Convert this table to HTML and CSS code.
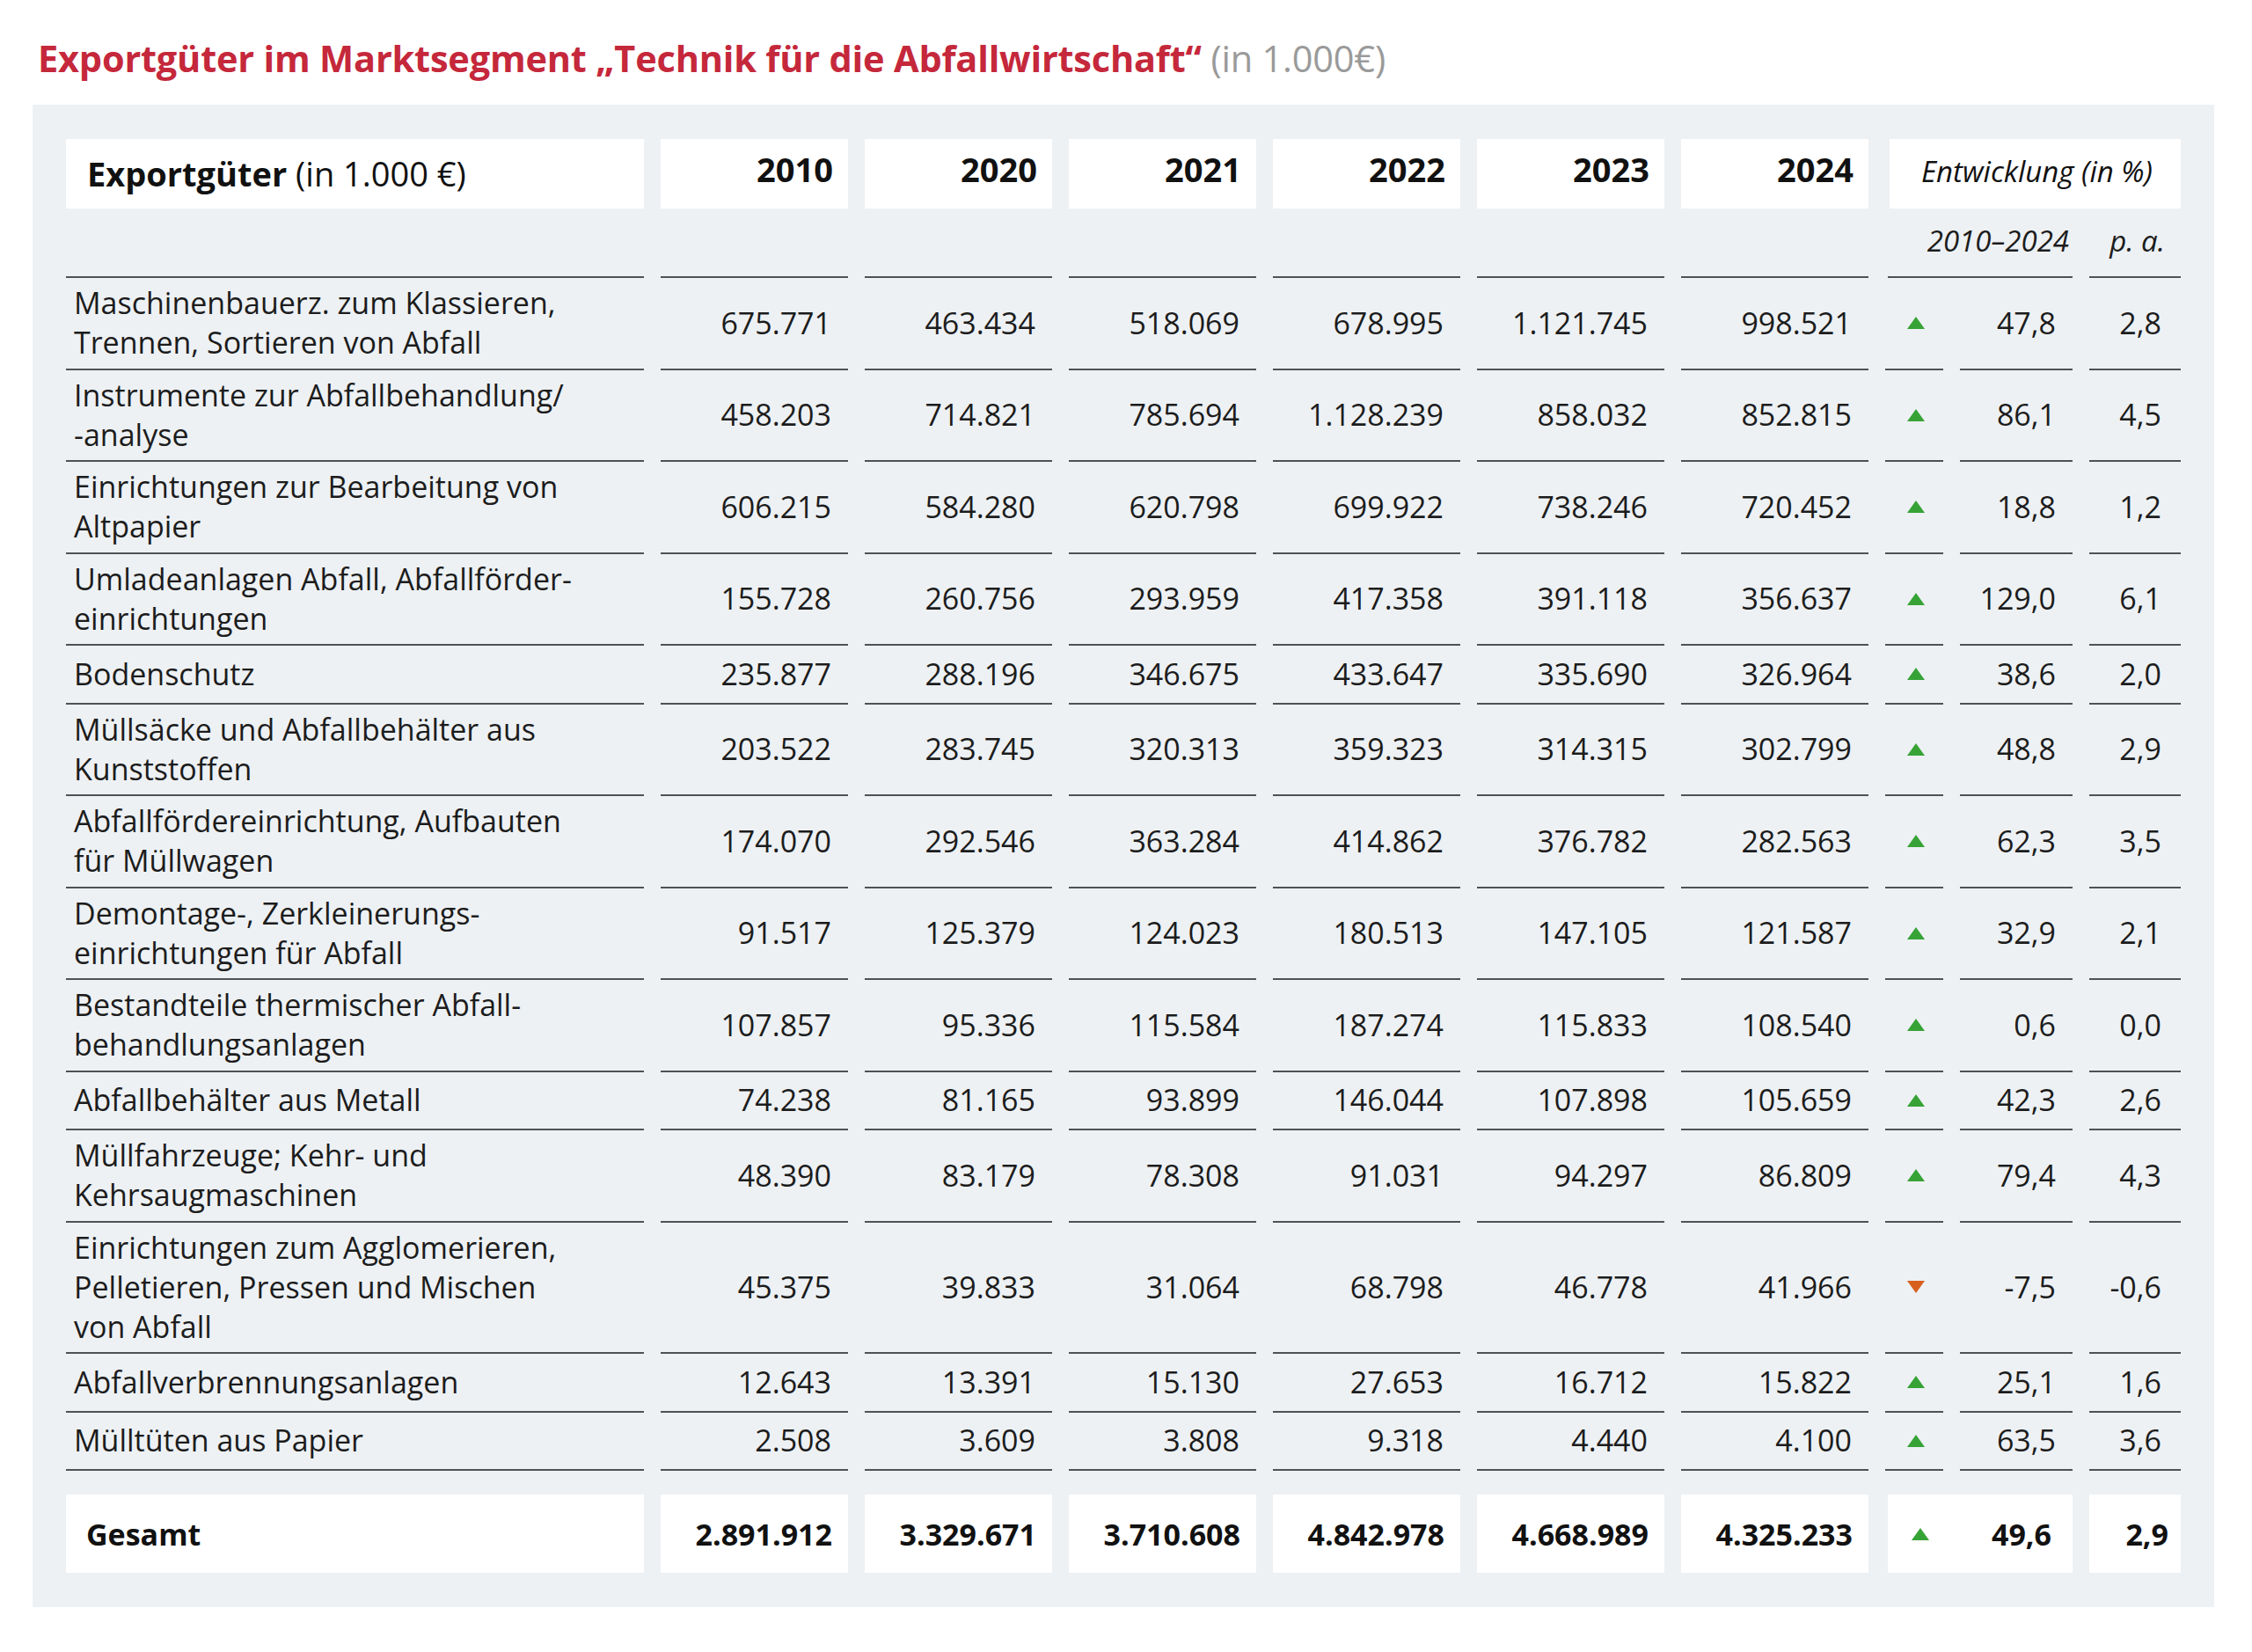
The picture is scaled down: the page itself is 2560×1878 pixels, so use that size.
FILE: index.html
```html
<!DOCTYPE html>
<html lang="de">
<head>
<meta charset="utf-8">
<title>Exportgüter Technik für die Abfallwirtschaft</title>
<link rel="stylesheet" href="styles.css">
</head>
<body>
<h1 class="title">Exportgüter im Marktsegment „Technik für die Abfallwirtschaft“ <span class="title-unit">(in 1.000€)</span></h1>
<div class="panel">
  <div class="grid">
    <div class="row head">
      <div class="hcell hname"><b>Exportgüter</b> (in 1.000 €)</div>
      <div class="hcell hyear">2010</div>
      <div class="hcell hyear">2020</div>
      <div class="hcell hyear">2021</div>
      <div class="hcell hyear">2022</div>
      <div class="hcell hyear">2023</div>
      <div class="hcell hyear">2024</div>
      <div class="hcell hdev">Entwicklung (in %)</div>
    </div>
    <div class="row sub">
      <div class="scell"></div>
      <div class="scell"></div>
      <div class="scell"></div>
      <div class="scell"></div>
      <div class="scell"></div>
      <div class="scell"></div>
      <div class="scell"></div>
      <div class="scell srange">2010–2024</div>
      <div class="scell spa">p. a.</div>
    </div>

    <div class="row">
      <div class="c name">Maschinenbauerz. zum Klassieren,<br>Trennen, Sortieren von Abfall</div>
      <div class="c num">675.771</div><div class="c num">463.434</div><div class="c num">518.069</div><div class="c num">678.995</div><div class="c num">1.121.745</div><div class="c num">998.521</div>
      <div class="c tri"><span class="up"></span></div><div class="c num">47,8</div><div class="c num pa">2,8</div>
    </div>
    <div class="row">
      <div class="c name">Instrumente zur Abfallbehandlung/<br>-analyse</div>
      <div class="c num">458.203</div><div class="c num">714.821</div><div class="c num">785.694</div><div class="c num">1.128.239</div><div class="c num">858.032</div><div class="c num">852.815</div>
      <div class="c tri"><span class="up"></span></div><div class="c num">86,1</div><div class="c num pa">4,5</div>
    </div>
    <div class="row">
      <div class="c name">Einrichtungen zur Bearbeitung von<br>Altpapier</div>
      <div class="c num">606.215</div><div class="c num">584.280</div><div class="c num">620.798</div><div class="c num">699.922</div><div class="c num">738.246</div><div class="c num">720.452</div>
      <div class="c tri"><span class="up"></span></div><div class="c num">18,8</div><div class="c num pa">1,2</div>
    </div>
    <div class="row">
      <div class="c name">Umladeanlagen Abfall, Abfallförder-<br>einrichtungen</div>
      <div class="c num">155.728</div><div class="c num">260.756</div><div class="c num">293.959</div><div class="c num">417.358</div><div class="c num">391.118</div><div class="c num">356.637</div>
      <div class="c tri"><span class="up"></span></div><div class="c num">129,0</div><div class="c num pa">6,1</div>
    </div>
    <div class="row">
      <div class="c name">Bodenschutz</div>
      <div class="c num">235.877</div><div class="c num">288.196</div><div class="c num">346.675</div><div class="c num">433.647</div><div class="c num">335.690</div><div class="c num">326.964</div>
      <div class="c tri"><span class="up"></span></div><div class="c num">38,6</div><div class="c num pa">2,0</div>
    </div>
    <div class="row">
      <div class="c name">Müllsäcke und Abfallbehälter aus<br>Kunststoffen</div>
      <div class="c num">203.522</div><div class="c num">283.745</div><div class="c num">320.313</div><div class="c num">359.323</div><div class="c num">314.315</div><div class="c num">302.799</div>
      <div class="c tri"><span class="up"></span></div><div class="c num">48,8</div><div class="c num pa">2,9</div>
    </div>
    <div class="row">
      <div class="c name">Abfallfördereinrichtung, Aufbauten<br>für Müllwagen</div>
      <div class="c num">174.070</div><div class="c num">292.546</div><div class="c num">363.284</div><div class="c num">414.862</div><div class="c num">376.782</div><div class="c num">282.563</div>
      <div class="c tri"><span class="up"></span></div><div class="c num">62,3</div><div class="c num pa">3,5</div>
    </div>
    <div class="row">
      <div class="c name">Demontage-, Zerkleinerungs-<br>einrichtungen für Abfall</div>
      <div class="c num">91.517</div><div class="c num">125.379</div><div class="c num">124.023</div><div class="c num">180.513</div><div class="c num">147.105</div><div class="c num">121.587</div>
      <div class="c tri"><span class="up"></span></div><div class="c num">32,9</div><div class="c num pa">2,1</div>
    </div>
    <div class="row">
      <div class="c name">Bestandteile thermischer Abfall-<br>behandlungsanlagen</div>
      <div class="c num">107.857</div><div class="c num">95.336</div><div class="c num">115.584</div><div class="c num">187.274</div><div class="c num">115.833</div><div class="c num">108.540</div>
      <div class="c tri"><span class="up"></span></div><div class="c num">0,6</div><div class="c num pa">0,0</div>
    </div>
    <div class="row">
      <div class="c name">Abfallbehälter aus Metall</div>
      <div class="c num">74.238</div><div class="c num">81.165</div><div class="c num">93.899</div><div class="c num">146.044</div><div class="c num">107.898</div><div class="c num">105.659</div>
      <div class="c tri"><span class="up"></span></div><div class="c num">42,3</div><div class="c num pa">2,6</div>
    </div>
    <div class="row">
      <div class="c name">Müllfahrzeuge; Kehr- und<br>Kehrsaugmaschinen</div>
      <div class="c num">48.390</div><div class="c num">83.179</div><div class="c num">78.308</div><div class="c num">91.031</div><div class="c num">94.297</div><div class="c num">86.809</div>
      <div class="c tri"><span class="up"></span></div><div class="c num">79,4</div><div class="c num pa">4,3</div>
    </div>
    <div class="row">
      <div class="c name">Einrichtungen zum Agglomerieren,<br>Pelletieren, Pressen und Mischen<br>von Abfall</div>
      <div class="c num">45.375</div><div class="c num">39.833</div><div class="c num">31.064</div><div class="c num">68.798</div><div class="c num">46.778</div><div class="c num">41.966</div>
      <div class="c tri"><span class="down"></span></div><div class="c num">-7,5</div><div class="c num pa">-0,6</div>
    </div>
    <div class="row">
      <div class="c name">Abfallverbrennungsanlagen</div>
      <div class="c num">12.643</div><div class="c num">13.391</div><div class="c num">15.130</div><div class="c num">27.653</div><div class="c num">16.712</div><div class="c num">15.822</div>
      <div class="c tri"><span class="up"></span></div><div class="c num">25,1</div><div class="c num pa">1,6</div>
    </div>
    <div class="row">
      <div class="c name">Mülltüten aus Papier</div>
      <div class="c num">2.508</div><div class="c num">3.609</div><div class="c num">3.808</div><div class="c num">9.318</div><div class="c num">4.440</div><div class="c num">4.100</div>
      <div class="c tri"><span class="up"></span></div><div class="c num">63,5</div><div class="c num pa">3,6</div>
    </div>

    <div class="row total">
      <div class="t tname">Gesamt</div>
      <div class="t tnum">2.891.912</div><div class="t tnum">3.329.671</div><div class="t tnum">3.710.608</div><div class="t tnum">4.842.978</div><div class="t tnum">4.668.989</div><div class="t tnum">4.325.233</div>
      <div class="t tdev"><span class="up"></span><span>49,6</span></div><div class="t tnum tpa">2,9</div>
    </div>
  </div>
</div>
</body>
</html>
```

FILE: styles.css
```css
html, body {
  margin: 0;
  padding: 0;
  background: #ffffff;
}

body {
  font-family: "Open Sans", "Liberation Sans", sans-serif;
  color: #1c1c1c;
  padding: 38px 0 0 37px;
}

.title {
  margin: 0 0 25px 6px;
  font-size: 41.5px;
  line-height: 56px;
  font-weight: 700;
  color: #c5283b;
  letter-spacing: -0.2px;
}

.title-unit {
  font-weight: 400;
  color: #9a9a9a;
}

.panel {
  width: 2404px;
  padding: 39px 38px;
  background: #edf1f4;
}

.grid {
  display: grid;
  grid-template-columns: 657px repeat(6, 213px) 66px 128px 104px;
  column-gap: 19px;
}

.row {
  display: contents;
}

/* header row */
.hcell {
  height: 79px;
  background: #ffffff;
  box-sizing: border-box;
  color: #111;
}

.hname {
  font-size: 38px;
  line-height: 48px;
  padding: 15px 24px 0;
}

.hname b {
  font-weight: 700;
}

.hyear {
  font-size: 38px;
  line-height: 48px;
  font-weight: 700;
  text-align: right;
  padding: 10px 17px 0 0;
}

.hdev {
  grid-column: 8 / span 3;
  margin-left: 5px;
  font-size: 33px;
  font-style: italic;
  line-height: 44px;
  text-align: center;
  padding: 15px 0 0 4px;
}

/* sub header row */
.scell {
  height: 79px;
  box-sizing: border-box;
  border-bottom: 2px solid #4f5254;
  font-size: 33px;
  font-style: italic;
  line-height: 44px;
  text-align: right;
  padding-top: 15px;
}

.srange {
  grid-column: 8 / span 2;
  padding-right: 4px;
  margin-left: 3px;
}

.spa {
  padding-right: 18px;
}

/* body rows */
.c {
  display: flex;
  align-items: center;
  box-sizing: border-box;
  min-height: 66.5px;
  border-bottom: 2px solid #4f5254;
  padding: 6px 19px 6.5px 9px;
  font-size: 34px;
  line-height: 45px;
}

.name {
  padding-left: 9px;
}

.num {
  justify-content: flex-end;
}

.pa {
  padding-right: 22px;
}

.tri {
  justify-content: center;
  padding: 0 0 0 3px;
}

.up,
.down {
  display: inline-block;
  width: 0;
  height: 0;
  border-left: 10.5px solid transparent;
  border-right: 10.5px solid transparent;
}

.up {
  border-bottom: 14px solid #37a336;
}

.down {
  border-top: 14px solid #d8601f;
}

/* total row */
.t {
  margin-top: 27px;
  height: 89px;
  box-sizing: border-box;
  background: #ffffff;
  display: flex;
  align-items: center;
  font-size: 34px;
  font-weight: 700;
  color: #111;
}

.tname {
  padding-left: 23px;
}

.tnum {
  justify-content: flex-end;
  padding-right: 18px;
}

.tpa {
  padding-right: 14px;
}

.tdev {
  grid-column: 8 / span 2;
  margin-left: 3px;
  justify-content: space-between;
  padding: 0 24px 0 27px;
}
```
